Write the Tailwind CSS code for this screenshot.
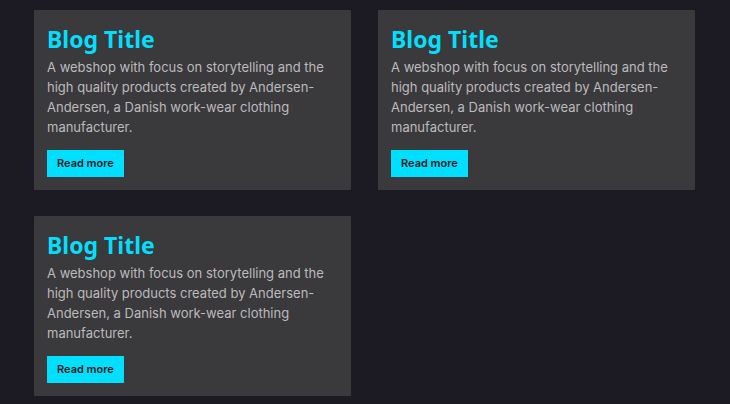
<!DOCTYPE html>
<html lang="en">
<head>
<meta charset="utf-8">
<meta name="viewport" content="width=device-width, initial-scale=1">
<title>Blog</title>
<script src="https://cdn.jsdelivr.net/npm/@tailwindcss/browser@4"></script>
</head>
<body class="min-h-screen bg-[#1c1a23] font-['Inter',sans-serif]">
<main class="grid grid-cols-2 items-start gap-x-[27px] gap-y-[26px] pt-[10px] pr-[35px] pb-2 pl-[34px]">
  <article class="rounded-[1px] bg-[#3a393c] p-[13px]">
    <h2 class="pb-[2px] font-['Noto_Sans',sans-serif] text-[23px] leading-[32px] font-bold text-[#00dfff]">Blog Title</h2>
    <p class="text-[13px] leading-[20px] text-[#bcbbbd]">A webshop with focus on storytelling and the high quality products created by Andersen-Andersen, a Danish work-wear clothing manufacturer.</p>
    <button type="button" class="mt-[13px] block h-[27px] bg-[#00dfff] px-[10px] text-[11px] font-semibold text-[#1c1a23]">Read more</button>
  </article>
  <article class="rounded-[1px] bg-[#3a393c] p-[13px]">
    <h2 class="pb-[2px] font-['Noto_Sans',sans-serif] text-[23px] leading-[32px] font-bold text-[#00dfff]">Blog Title</h2>
    <p class="text-[13px] leading-[20px] text-[#bcbbbd]">A webshop with focus on storytelling and the high quality products created by Andersen-Andersen, a Danish work-wear clothing manufacturer.</p>
    <button type="button" class="mt-[13px] block h-[27px] bg-[#00dfff] px-[10px] text-[11px] font-semibold text-[#1c1a23]">Read more</button>
  </article>
  <article class="rounded-[1px] bg-[#3a393c] p-[13px]">
    <h2 class="pb-[2px] font-['Noto_Sans',sans-serif] text-[23px] leading-[32px] font-bold text-[#00dfff]">Blog Title</h2>
    <p class="text-[13px] leading-[20px] text-[#bcbbbd]">A webshop with focus on storytelling and the high quality products created by Andersen-Andersen, a Danish work-wear clothing manufacturer.</p>
    <button type="button" class="mt-[13px] block h-[27px] bg-[#00dfff] px-[10px] text-[11px] font-semibold text-[#1c1a23]">Read more</button>
  </article>
</main>
</body>
</html>
